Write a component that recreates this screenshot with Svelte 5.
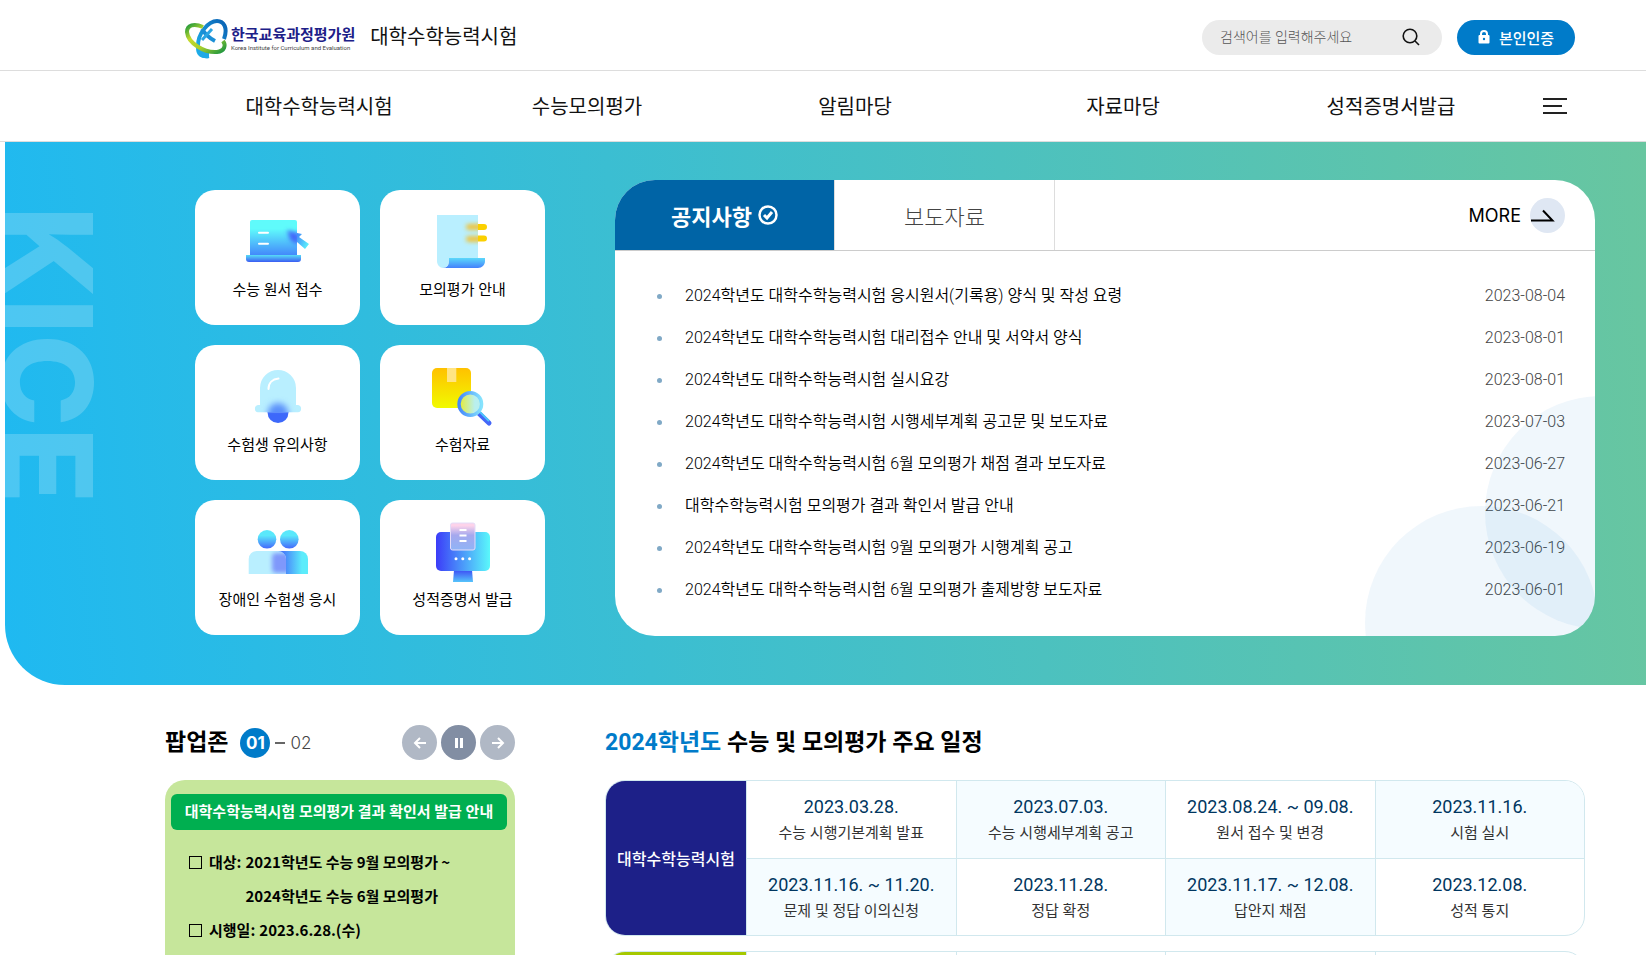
<script>
  const menus = ['대학수학능력시험', '수능모의평가', '알림마당', '자료마당', '성적증명서발급'];

  const quickLinks = [
    { icon: 'laptop', label: '수능 원서 접수' },
    { icon: 'paper', label: '모의평가 안내' },
    { icon: 'bell', label: '수험생 유의사항' },
    { icon: 'box', label: '수험자료' },
    { icon: 'people', label: '장애인 수험생 응시' },
    { icon: 'monitor', label: '성적증명서 발급' }
  ];

  const notices = [
    { title: '2024학년도 대학수학능력시험 응시원서(기록용) 양식 및 작성 요령', date: '2023-08-04' },
    { title: '2024학년도 대학수학능력시험 대리접수 안내 및 서약서 양식', date: '2023-08-01' },
    { title: '2024학년도 대학수학능력시험 실시요강', date: '2023-08-01' },
    { title: '2024학년도 대학수학능력시험 시행세부계획 공고문 및 보도자료', date: '2023-07-03' },
    { title: '2024학년도 대학수학능력시험 6월 모의평가 채점 결과 보도자료', date: '2023-06-27' },
    { title: '대학수학능력시험 모의평가 결과 확인서 발급 안내', date: '2023-06-21' },
    { title: '2024학년도 대학수학능력시험 9월 모의평가 시행계획 공고', date: '2023-06-19' },
    { title: '2024학년도 대학수학능력시험 6월 모의평가 출제방향 보도자료', date: '2023-06-01' }
  ];

  const schedule = [
    [
      { date: '2023.03.28.', text: '수능 시행기본계획 발표' },
      { date: '2023.07.03.', text: '수능 시행세부계획 공고' },
      { date: '2023.08.24. ~ 09.08.', text: '원서 접수 및 변경' },
      { date: '2023.11.16.', text: '시험 실시' }
    ],
    [
      { date: '2023.11.16. ~ 11.20.', text: '문제 및 정답 이의신청' },
      { date: '2023.11.28.', text: '정답 확정' },
      { date: '2023.11.17. ~ 12.08.', text: '답안지 채점' },
      { date: '2023.12.08.', text: '성적 통지' }
    ]
  ];

  let paused = $state(false);
</script>

<header>
  <div class="top-bar">
    <a class="logo" href="#home">
      <svg width="44" height="40" viewBox="0 0 44 40" aria-hidden="true">
        <defs>
          <linearGradient id="lg-green" x1="0" y1="0" x2="1" y2="1">
            <stop offset="0" stop-color="#1f9a3c" />
            <stop offset="0.3" stop-color="#c5d92d" />
            <stop offset="0.6" stop-color="#a8cf2c" />
            <stop offset="1" stop-color="#1a9440" />
          </linearGradient>
          <linearGradient id="lg-blue" x1="1" y1="0" x2="0" y2="1">
            <stop offset="0" stop-color="#0b62b4" />
            <stop offset="1" stop-color="#1fb6ee" />
          </linearGradient>
        </defs>
        <path d="M39 20C43 9 39 2 32 2C24 2 12 14 13 29C13 35 16 38 24 37" fill="none" stroke="url(#lg-blue)" stroke-width="4" />
        <path d="M12 30C12 37 17 40 24 39V34L14 28Z" fill="#1fa9e6" />
        <path d="M17 10C20 15 24 19 30 22" fill="none" stroke="#1b8fd6" stroke-width="4" />
        <path d="M17 21L27 10" fill="none" stroke="#2ba5e2" stroke-width="3" />
        <path d="M18 8C9 4 2 6 2 13C3 24 19 34 32 33C40 32 41 26 38 22" fill="none" stroke="url(#lg-green)" stroke-width="4" />
      </svg>
      <span class="logo-text">
        <strong>한국교육과정평가원</strong>
        <small>Korea Institute for Curriculum and Evaluation</small>
      </span>
    </a>
    <a class="site-name" href="#home">대학수학능력시험</a>
    <form class="search" onsubmit={(e) => e.preventDefault()}>
      <input type="search" placeholder="검색어를 입력해주세요" aria-label="검색어를 입력해주세요" />
      <button type="submit" aria-label="검색">
        <svg width="18" height="18" viewBox="0 0 18 18" fill="none" stroke="#111" stroke-width="1.6">
          <circle cx="8" cy="8" r="6.800" />
          <path d="M13 13l4 4" />
        </svg>
      </button>
    </form>
    <button class="auth" type="button">
      <svg width="12" height="14" viewBox="0 0 12 14" aria-hidden="true">
        <path d="M3 6V4a3 3 0 0 1 6 0v2" fill="none" stroke="#fff" stroke-width="2" />
        <rect x="0.5" y="5" width="11" height="8.5" rx="1" fill="#fff" />
        <circle cx="6" cy="9" r="1.2" fill="#007bc9" />
      </svg>
      본인인증
    </button>
  </div>
  <nav>
    <ul>
      {#each menus as menu}
        <li><a href="#menu">{menu}</a></li>
      {/each}
    </ul>
    <button class="all-menu" type="button" aria-label="전체메뉴">
      <svg width="24" height="16" viewBox="0 0 24 16" fill="#222">
        <rect width="24" height="2" />
        <rect y="7" width="19" height="2" />
        <rect y="14" width="24" height="2" />
      </svg>
    </button>
  </nav>
</header>

<main>
  <section class="hero">
    <div class="watermark" aria-hidden="true">KICE</div>
    <div class="quick">
      {#each quickLinks as link}
        <a href="#quick">
          <svg width="64" height="64" viewBox="0 0 64 64" aria-hidden="true">
            {#if link.icon === 'laptop'}
              <defs>
                <linearGradient id="lap-a" x1="0" y1="0" x2="0" y2="1">
                  <stop offset="0.25" stop-color="#5ffbfb" />
                  <stop offset="1" stop-color="#4389fb" />
                </linearGradient>
                <linearGradient id="lap-b" x1="0" y1="0" x2="0" y2="1">
                  <stop offset="0" stop-color="#57dcf7" />
                  <stop offset="1" stop-color="#3b5cf3" />
                </linearGradient>
                <linearGradient id="lap-c" x1="0" y1="0" x2="1" y2="0.6">
                  <stop offset="0" stop-color="#4284fb" />
                  <stop offset="1" stop-color="#5cf0fb" />
                </linearGradient>
                <filter id="lap-blur" x="-50%" y="-50%" width="200%" height="200%">
                  <feGaussianBlur stdDeviation="2" />
                </filter>
                <clipPath id="lap-clip"><path d="M4 10h47v35H4z" /></clipPath>
              </defs>
              <path d="M51 23l5 1-3 3 10 7-4 5-8-7z" fill="url(#lap-c)" />
              <path d="M4 45V12a2 2 0 0 1 2-2h43a2 2 0 0 1 2 2v33z" fill="url(#lap-a)" />
              <g clip-path="url(#lap-clip)">
                <path d="M41 20l14 4-3 4 3 4-5 2-6-4z" fill="#426bfa" filter="url(#lap-blur)" />
              </g>
              <path d="M0 45h55v4a3 3 0 0 1-3 3H3a3 3 0 0 1-3-3z" fill="url(#lap-b)" />
              <path d="M13 22.700h9M13 33.700h9" stroke="#fff" stroke-width="2" stroke-linecap="round" />
            {:else if link.icon === 'paper'}
              <defs>
                <linearGradient id="pap-a" x1="0" y1="0" x2="0" y2="1">
                  <stop offset="0" stop-color="#5cd9fb" />
                  <stop offset="1" stop-color="#4480fb" />
                </linearGradient>
                <filter id="pap-blur" x="-50%" y="-80%" width="200%" height="260%">
                  <feGaussianBlur stdDeviation="2" />
                </filter>
                <clipPath id="pap-clip"><path d="M6 5h41v43H6z" /></clipPath>
              </defs>
              <path d="M6 5h41v43H18v3c0 4-3 7-6 7s-6-3-6-7z" fill="#b9efff" />
              <g clip-path="url(#pap-clip)">
                <g filter="url(#pap-blur)" fill="#efc43c">
                  <rect x="35" y="14" width="20" height="6" rx="3" />
                  <rect x="35" y="26" width="20" height="6" rx="3" />
                </g>
              </g>
              <path d="M18 48h36v3c0 4-3 7-7 7H12c4 0 6-3 6-7z" fill="url(#pap-a)" />
              <path d="M47 14h6a3 3 0 0 1 0 6h-6zM47 25.500h6a3 3 0 0 1 0 6h-6z" fill="#fbd000" />
            {:else if link.icon === 'bell'}
              <defs>
                <linearGradient id="bell-a" x1="0" y1="0" x2="0" y2="1">
                  <stop offset="0" stop-color="#5b8bfb" />
                  <stop offset="0.6" stop-color="#3d68fa" />
                </linearGradient>
                <filter id="bell-blur" x="-50%" y="-50%" width="200%" height="200%">
                  <feGaussianBlur stdDeviation="3" />
                </filter>
                <clipPath id="bell-clip"><path d="M0 0h64v47.300H0z" /></clipPath>
              </defs>
              <circle cx="32" cy="47.500" r="10.500" fill="url(#bell-a)" />
              <path d="M14 23a18 18 0 0 1 36 0v17h2a3.700 3.700 0 0 1 0 7.300H12a3.700 3.700 0 0 1 0-7.300h2z" fill="#b9efff" />
              <g clip-path="url(#bell-clip)">
                <circle cx="32" cy="48.500" r="10.500" fill="#5a90fb" filter="url(#bell-blur)" />
              </g>
              <path d="M22.500 24c0-6 4-10 10-10.500" fill="none" stroke="#fff" stroke-width="2" stroke-linecap="round" />
            {:else if link.icon === 'box'}
              <defs>
                <linearGradient id="box-a" x1="0" y1="0" x2="0" y2="1">
                  <stop offset="0" stop-color="#ffc100" />
                  <stop offset="1" stop-color="#f1fa00" />
                </linearGradient>
                <linearGradient id="box-b">
                  <stop offset="0" stop-color="#4488fb" />
                  <stop offset="1" stop-color="#86e3fd" />
                </linearGradient>
                <linearGradient id="box-c">
                  <stop offset="0" stop-color="#e8ec2c" />
                  <stop offset="0.700" stop-color="#b9efee" />
                </linearGradient>
              </defs>
              <rect x="1" y="3" width="39" height="40" rx="5" fill="url(#box-a)" />
              <path d="M16 3h9.300v14H16z" fill="#ffe483" />
              <path d="M48 48.500l10 9.500" stroke="#4467f8" stroke-width="5" stroke-linecap="round" />
              <path d="M49 47l9 9" stroke="#4fc3fa" stroke-width="2" />
              <circle cx="39.300" cy="39" r="11.300" fill="url(#box-c)" stroke="url(#box-b)" stroke-width="3.400" />
            {:else if link.icon === 'people'}
              <defs>
                <linearGradient id="ppl-a" x1="0" y1="0" x2="0" y2="1">
                  <stop offset="0.3" stop-color="#5ae8fb" />
                  <stop offset="1" stop-color="#4468fb" />
                </linearGradient>
                <linearGradient id="ppl-b">
                  <stop offset="0.1" stop-color="#4570fa" />
                  <stop offset="0.800" stop-color="#5cecfb" />
                </linearGradient>
                <filter id="ppl-blur" x="-50%" y="-50%" width="200%" height="200%">
                  <feGaussianBlur stdDeviation="2" />
                </filter>
                <clipPath id="ppl-clip"><path d="M2.700 54V39a8 8 0 0 1 8-8H32a8 8 0 0 1 8 8v15z" /></clipPath>
              </defs>
              <circle cx="21" cy="19.300" r="9.300" fill="url(#ppl-a)" />
              <circle cx="43.300" cy="19.300" r="9.300" fill="url(#ppl-a)" />
              <path d="M32 31h22a8 8 0 0 1 8 8v15H32z" fill="url(#ppl-b)" />
              <path d="M2.700 54V39a8 8 0 0 1 8-8H32a8 8 0 0 1 8 8v15z" fill="#b9efff" />
              <g clip-path="url(#ppl-clip)">
                <rect x="26" y="33" width="18" height="20" rx="4" fill="#7f98fb" filter="url(#ppl-blur)" />
              </g>
            {:else}
              <defs>
                <linearGradient id="mon-a">
                  <stop offset="0" stop-color="#3c3cf8" />
                  <stop offset="1" stop-color="#5af8fb" />
                </linearGradient>
                <linearGradient id="mon-b" x1="0" y1="0" x2="0" y2="1">
                  <stop offset="0" stop-color="#3d4df5" />
                  <stop offset="1" stop-color="#55c4fb" />
                </linearGradient>
                <linearGradient id="mon-c" x1="0" y1="0" x2="0" y2="1">
                  <stop offset="0.1" stop-color="#fdd3ea" />
                  <stop offset="0.450" stop-color="#a5a8ee" />
                  <stop offset="1" stop-color="#8fb4f6" />
                </linearGradient>
              </defs>
              <path d="M23 50h18l1 12H22z" fill="url(#mon-b)" />
              <rect x="5" y="12" width="54" height="39" rx="5" fill="url(#mon-a)" />
              <rect x="19.500" y="3" width="24.500" height="27" rx="2" fill="url(#mon-c)" stroke="#e4dcf8" />
              <path d="M28.500 10h7M28.500 15.500h7M28.500 21h7" stroke="#fff" stroke-width="2" />
              <g fill="#fff">
                <circle cx="25" cy="38.700" r="1.500" />
                <circle cx="31.800" cy="38.700" r="1.500" />
                <circle cx="38.600" cy="38.700" r="1.500" />
              </g>
            {/if}
          </svg>
          <span>{link.label}</span>
        </a>
      {/each}
    </div>

    <div class="board">
      <div class="board-head">
        <button class="tab active" type="button">
          공지사항
          <svg width="20" height="20" viewBox="0 0 20 20" fill="none" stroke="#fff" aria-hidden="true">
            <circle cx="10" cy="10" r="8.500" stroke-width="2.500" />
            <path d="M6 10l3 3 5-6" stroke-width="3" />
          </svg>
        </button>
        <button class="tab" type="button">보도자료</button>
        <a class="more" href="#more">
          MORE
          <span class="more-circle">
            <svg width="35" height="35" viewBox="0 0 35 35" fill="none" stroke="#000" stroke-width="2" aria-hidden="true">
              <path d="M1 22.500h21.500L13 12.500" />
            </svg>
          </span>
        </a>
      </div>
      <ul class="notice-list">
        {#each notices as notice}
          <li>
            <a href="#notice">{notice.title}</a>
            <time datetime={notice.date}>{notice.date}</time>
          </li>
        {/each}
      </ul>
      <i class="bubble low"></i>
      <i class="bubble high"></i>
    </div>
  </section>

  <div class="lower">
    <section class="popup">
      <div class="section-head">
        <h2>팝업존</h2>
        <div class="pager">
          <strong>01</strong>
          <i></i>
          <span>02</span>
        </div>
        <div class="controls">
          <button type="button" aria-label="이전">
            <svg width="14" height="12" viewBox="0 0 14 12"><path d="M13 6H2M7 1L2 6l5 5" /></svg>
          </button>
          <button class="pause" type="button" aria-label="정지" onclick={() => (paused = !paused)}>
            <svg width="14" height="12" viewBox="0 0 14 12">
              {#if paused}
                <path d="M4 1l7 5-7 5z" />
              {:else}
                <path d="M4.500 1v10M9.500 1v10" stroke-width="3" />
              {/if}
            </svg>
          </button>
          <button type="button" aria-label="다음">
            <svg width="14" height="12" viewBox="0 0 14 12"><path d="M1 6h11M7 1l5 5-5 5" /></svg>
          </button>
        </div>
      </div>
      <div class="popup-card">
        <h3>대학수학능력시험 모의평가 결과 확인서 발급 안내</h3>
        <dl>
          <div>
            <dt>대상:</dt>
            <dd>2021학년도 수능 9월 모의평가 ~<br />2024학년도 수능 6월 모의평가</dd>
          </div>
          <div>
            <dt>시행일:</dt>
            <dd>2023.6.28.(수)</dd>
          </div>
        </dl>
      </div>
    </section>

    <section class="schedule">
      <div class="section-head">
        <h2><em>2024학년도</em> 수능 및 모의평가 주요 일정</h2>
      </div>
      <div class="table-box">
        <table>
          <tbody>
            {#each schedule as row, i}
              <tr>
                {#if i === 0}
                  <th scope="rowgroup" rowspan="2">대학수학능력시험</th>
                {/if}
                {#each row as cell, j}
                  <td class:tint={(i + j) % 2 === 1}>
                    <b>{cell.date}</b>
                    <span>{cell.text}</span>
                  </td>
                {/each}
              </tr>
            {/each}
          </tbody>
        </table>
      </div>
      <div class="table-box">
        <table class="mock">
          <tbody>
            <tr><th></th><td></td><td></td><td></td><td></td></tr>
          </tbody>
        </table>
      </div>
    </section>
  </div>
</main>

<style>
  :global(body) {
    margin: 0;
    background: #fff;
    color: #111;
    font-family: Roboto, 'Noto Sans CJK KR', sans-serif;
    font-size: 16px;
    overflow-x: hidden;
  }

  :global(#app) * {
    box-sizing: border-box;
  }

  a {
    color: inherit;
    text-decoration: none;
  }

  button {
    padding: 0;
    border: 0;
    background: none;
    color: inherit;
    font: inherit;
    cursor: pointer;
  }

  ul, dl, dd, h2, h3 {
    margin: 0;
    padding: 0;
    list-style: none;
  }

  svg {
    display: block;
    flex: none;
  }

  /* header */
  .top-bar {
    display: flex;
    align-items: center;
    height: 71px;
    padding: 4px 71px 0 185px;
    border-bottom: 1px solid #ddd;
  }

  .logo {
    display: flex;
    align-items: center;
    gap: 2px;
    padding-top: 3px;
  }

  .logo-text {
    display: flex;
    flex-direction: column;
    color: #1d2088;
    white-space: nowrap;
  }

  .logo-text strong {
    font-size: 15px;
    line-height: 18px;
  }

  .logo-text small {
    color: #444;
    font-size: 6px;
    line-height: 8px;
  }

  .site-name {
    margin-left: 15px;
    font-size: 20px;
    line-height: 30px;
  }

  .search {
    display: flex;
    align-items: center;
    width: 240px;
    height: 35px;
    margin-left: auto;
    padding: 0 22px 0 18px;
    border-radius: 18px;
    background: #ebebeb;
  }

  .search input {
    flex: 1;
    min-width: 0;
    padding: 0;
    border: 0;
    outline: 0;
    background: none;
    font: inherit;
    font-size: 14px;
    font-weight: 300;
  }

  .search input::placeholder {
    color: #555;
  }

  .auth {
    display: flex;
    align-items: center;
    justify-content: center;
    gap: 9px;
    width: 118px;
    height: 35px;
    margin-left: 15px;
    border-radius: 18px;
    background: #007bc9;
    color: #fff;
    font-size: 15px;
    font-weight: 500;
  }

  nav {
    display: flex;
    align-items: center;
    height: 71px;
    padding: 0 71px 0 185px;
    border-bottom: 1px solid #ddd;
  }

  nav ul {
    display: grid;
    grid-template-columns: repeat(5, 1fr);
    flex: 1;
  }

  nav li {
    padding-top: 2px;
    font-size: 20px;
    line-height: 30px;
    text-align: center;
  }

  .all-menu {
    padding: 0 8px 0 18px;
  }

  /* hero */
  .hero {
    position: relative;
    display: flex;
    align-items: flex-start;
    gap: 70px;
    margin-left: 5px;
    padding: 38px 51px 49px 190px;
    border-bottom-left-radius: 60px;
    background: linear-gradient(85deg, #1fb9f1, #68c6a0);
    overflow: hidden;
  }

  .watermark {
    position: absolute;
    top: 64px;
    left: 0;
    color: rgba(255, 255, 255, 0.2);
    font-family: Inter, sans-serif;
    font-size: 125px;
    font-weight: 800;
    line-height: 84px;
    writing-mode: vertical-rl;
  }

  .quick {
    display: grid;
    grid-template-columns: 165px 165px;
    gap: 20px;
    flex: none;
    padding-top: 10px;
  }

  .quick a {
    display: flex;
    flex-direction: column;
    align-items: center;
    gap: 4px;
    height: 135px;
    padding-top: 20px;
    border-radius: 20px;
    background: #fff;
    color: #000;
    font-size: 15px;
    line-height: 24px;
  }

  .board {
    position: relative;
    flex: 1;
    min-width: 0;
    border-radius: 40px;
    background: #fff;
    overflow: hidden;
  }

  .board-head {
    display: flex;
    align-items: center;
    height: 71px;
    padding-right: 30px;
    border-bottom: 1px solid #ccc;
  }

  .tab {
    display: flex;
    align-items: center;
    justify-content: center;
    gap: 6px;
    width: 220px;
    height: 70px;
    border-right: 1px solid #ddd;
    color: #444;
    font-size: 22px;
    font-weight: 300;
  }

  .tab.active {
    background: #0064a6;
    color: #fff;
    font-weight: 700;
  }

  .more {
    display: flex;
    align-items: center;
    gap: 9px;
    margin-left: auto;
    color: #000;
    font-family: Inter, sans-serif;
    font-size: 18px;
  }

  .more-circle {
    border-radius: 50%;
    background: #dfe7f3;
  }

  .notice-list {
    padding: 24px 30px 25px 42px;
  }

  .notice-list li {
    display: flex;
    align-items: center;
    color: #000;
    line-height: 42px;
    font-weight: 350;
  }

  .notice-list li::before {
    content: '';
    width: 5px;
    height: 5px;
    margin-right: 23px;
    border-radius: 50%;
    background: #80a9c6;
  }

  .notice-list time {
    margin-left: auto;
    color: #444;
  }

  .bubble {
    position: absolute;
    width: 233px;
    height: 233px;
    border-radius: 50%;
    background: rgba(0, 114, 198, 0.06);
    pointer-events: none;
  }

  .bubble.low {
    right: -3px;
    bottom: -103px;
  }

  .bubble.high {
    right: -123px;
    bottom: 7px;
  }

  /* popup zone and schedule */
  .lower {
    display: flex;
    gap: 90px;
    padding: 40px 61px 0 165px;
  }

  .popup {
    flex: none;
    width: 350px;
  }

  .section-head {
    display: flex;
    align-items: center;
    height: 35px;
    margin-bottom: 20px;
  }

  h2 {
    color: #000;
    font-size: 23px;
    font-weight: 700;
    line-height: 35px;
  }

  h2 em {
    color: #007bc9;
    font-style: normal;
  }

  .pager {
    display: flex;
    align-items: center;
    gap: 5px;
    margin-left: 12px;
    color: #444;
    font-family: Inter, sans-serif;
    font-size: 17px;
    font-weight: 300;
  }

  .pager strong {
    width: 30px;
    border-radius: 50%;
    background: #007bc9;
    color: #fff;
    font-weight: 700;
    line-height: 30px;
    text-align: center;
  }

  .pager i {
    width: 10px;
    height: 2px;
    background: #666;
  }

  .controls {
    display: flex;
    gap: 4px;
    margin-left: auto;
  }

  .controls button {
    display: grid;
    place-items: center;
    width: 35px;
    height: 35px;
    border-radius: 50%;
    background: #b0b8c5;
  }

  .controls .pause {
    background: #828ea3;
  }

  .controls svg {
    fill: none;
    stroke: #fff;
    stroke-width: 2;
  }

  .popup-card {
    min-height: 330px;
    padding: 14px 8px 0 6px;
    border-radius: 20px;
    background: #c6e69b;
    color: #000;
  }

  h3 {
    border-radius: 6px;
    background: #00af50;
    color: #fff;
    font-size: 15px;
    line-height: 36px;
    text-align: center;
    white-space: nowrap;
  }

  dl {
    padding: 15px 0 0 18px;
    font-family: 'Noto Sans CJK KR', sans-serif;
    font-size: 15px;
    font-weight: 700;
    line-height: 34px;
  }

  dl div {
    display: flex;
    gap: 4px;
  }

  dt {
    display: flex;
    align-items: center;
    height: 34px;
  }

  dt::before {
    content: '';
    width: 11px;
    height: 11px;
    margin-right: 7px;
    border: 1px solid #000;
  }

  .schedule {
    flex: 1;
    min-width: 0;
  }

  .table-box {
    margin-bottom: 15px;
    border: 1px solid #d1e8ee;
    border-radius: 20px;
    overflow: hidden;
  }

  table {
    width: 100%;
    border-spacing: 0;
    table-layout: fixed;
  }

  th {
    width: 140px;
    padding: 0;
    background: #1d2088;
    color: #fff;
    font-size: 16px;
    font-weight: 500;
  }

  td {
    height: 77px;
    padding: 1px 0 0;
    border-left: 1px solid #d1e8ee;
    text-align: center;
    line-height: 27px;
  }

  tr + tr td {
    border-top: 1px solid #d1e8ee;
  }

  td.tint {
    background: #f5fcff;
  }

  td b {
    display: block;
    color: #003660;
    font-size: 18px;
    font-weight: 400;
  }

  td span {
    display: block;
    color: #333;
    font-size: 15px;
  }

  .mock th {
    background: #a5c800;
  }
</style>
